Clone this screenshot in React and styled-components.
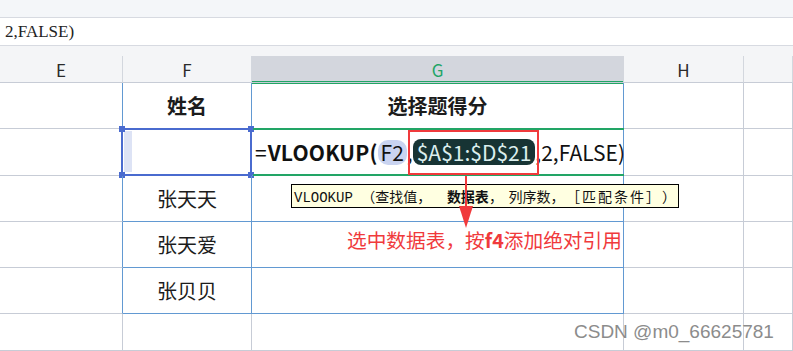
import React from 'react';
import styled, { createGlobalStyle } from 'styled-components';

const GRID = '#c7ccd6';
const BLUE = '#6299d2';
const GREEN = '#22a566';
const SELECT = '#4a6bcf';
const RED = '#f03a3c';

const GlobalStyle = createGlobalStyle`
  html, body { margin: 0; padding: 0; background: #fff; }
  body {
    font-family: "Noto Sans CJK SC", "Liberation Sans", sans-serif;
    color: #1c1c1c;
  }
`;

const Page = styled.div`
  position: relative;
  width: 793px;
  height: 351px;
  overflow: hidden;
  display: flex;
  flex-direction: column;
`;

const TopStrip = styled.div`
  flex: none;
  height: 17px;
  background: #f4f6f9;
  border-bottom: 1px solid #d7dae1;
`;

const FormulaBar = styled.div`
  flex: none;
  height: 27px;
  display: flex;
  align-items: center;
  padding-left: 5px;
  border-bottom: 1px solid #d7dae1;
  font-family: "Liberation Serif", serif;
  font-size: 17px;
  color: #222;
`;

const HeaderGap = styled.div`
  flex: none;
  height: 10px;
  background: #f4f5f7;
`;

const columns = '123px 129px 372px 120px 1fr';

const ColumnHeaders = styled.div`
  flex: none;
  display: grid;
  grid-template-columns: ${columns};
  height: 27px;
  background: #f4f5f7;
`;

const ColHead = styled.div`
  display: flex;
  align-items: center;
  justify-content: center;
  font-size: 17px;
  color: ${(p) => (p.$active ? GREEN : '#2a2a2a')};
  background: ${(p) => (p.$active ? '#d3d6dd' : 'transparent')};
  border-right: 1px solid ${(p) => (p.$active ? '#d3d6dd' : '#d3d7de')};
  border-bottom: 1px solid ${GRID};
  box-shadow: ${(p) => (p.$active ? `inset 0 -1px 0 ${GREEN}, 0 1px 0 ${GREEN}` : 'none')};
  box-sizing: border-box;
`;

const Sheet = styled.div`
  flex: 1;
  display: grid;
  grid-template-columns: ${columns};
  grid-template-rows: 46px 47px 46px 46px 46px 1fr;
`;

const Cell = styled.div`
  position: relative;
  display: flex;
  align-items: center;
  justify-content: center;
  box-sizing: border-box;
  border-right: 1px solid ${(p) => p.$right || GRID};
  border-bottom: 1px solid ${(p) => p.$bottom || GRID};
  font-size: 20px;
  font-weight: ${(p) => (p.$bold ? 700 : 400)};
  white-space: nowrap;
`;

const SelectFrame = styled.div`
  position: absolute;
  left: -2px;
  top: -1px;
  right: -1px;
  bottom: -1px;
  border: 2px solid ${SELECT};
  pointer-events: none;
`;

const Handle = styled.span`
  position: absolute;
  width: 6px;
  height: 6px;
  background: ${SELECT};
  ${(p) => (p.$top ? 'top: -4px;' : 'bottom: -4px;')}
  ${(p) => (p.$left ? 'left: -4px;' : 'right: -4px;')}
`;

const CursorStrip = styled.div`
  position: absolute;
  left: 1px;
  top: 2px;
  bottom: 3px;
  width: 8px;
  background: #dde3f5;
`;

const EditFrame = styled.div`
  position: absolute;
  left: 1px;
  top: -1px;
  right: -1px;
  bottom: -1px;
  border-top: 2px solid ${GREEN};
  border-bottom: 2px solid ${GREEN};
  pointer-events: none;
`;

const Formula = styled.div`
  position: absolute;
  left: 3px;
  top: 0;
  bottom: 0;
  display: flex;
  align-items: center;
  font-size: 21px;
  line-height: 1;
  color: #111;
`;

const Eq = styled.span`
  font-weight: 400;
  margin-right: 1px;
`;

const Fn = styled.span`
  font-weight: 700;
  letter-spacing: 0.2px;
`;

const RefPill = styled.span`
  display: inline-flex;
  align-items: center;
  height: 25px;
  padding: 0 3px;
  border-radius: 10px;
  background: #c9d3f0;
`;

const RangePill = styled.span`
  position: relative;
  display: inline-flex;
  align-items: center;
  height: 26px;
  padding: 0 4px;
  border-radius: 8px;
  background: #173434;
  color: #dcefee;
`;

const RedBox = styled.span`
  position: absolute;
  left: -5px;
  right: -4px;
  top: -9px;
  bottom: -10px;
  border: 2px solid ${RED};
`;

const Tooltip = styled.div`
  position: absolute;
  left: 291px;
  top: 184px;
  width: 388px;
  height: 24px;
  box-sizing: border-box;
  display: flex;
  align-items: center;
  padding-left: 2px;
  border: 1px solid #000;
  background: #ffffe1;
  font-family: "Liberation Mono", "Noto Sans CJK SC", monospace;
  font-size: 14px;
  color: #111;
  white-space: pre;
  text-spacing-trim: space-all;
`;

const Gap = styled.span`
  display: inline-block;
  width: ${(p) => p.$w}px;
`;

const Spread = styled.span`
  letter-spacing: 2px;
`;

const Strong = styled.b`
  font-weight: 700;
`;

const Arrow = styled.svg`
  position: absolute;
  left: 456px;
  top: 176px;
`;

const Note = styled.div`
  position: absolute;
  left: 347px;
  top: 230px;
  font-size: 19.7px;
  line-height: 20px;
  color: ${RED};
  white-space: nowrap;
`;

const Watermark = styled.div`
  position: absolute;
  left: 574px;
  top: 321px;
  font-family: "Liberation Sans", sans-serif;
  font-size: 19px;
  line-height: 22px;
  color: #8c8c8c;
  text-shadow: 0 0 1px #fff;
  white-space: nowrap;
`;

const people = ['张天天', '张天爱', '张贝贝'];

const App = () => {
  const rows = [
    { f: '姓名', g: '选择题得分', bold: true },
    { formula: true },
    ...people.map((name) => ({ f: name })),
    { last: true },
  ];

  return (
    <Page>
      <GlobalStyle />
      <TopStrip />
      <FormulaBar>2,FALSE)</FormulaBar>
      <HeaderGap />
      <ColumnHeaders>
        <ColHead>E</ColHead>
        <ColHead>F</ColHead>
        <ColHead $active>G</ColHead>
        <ColHead>H</ColHead>
        <ColHead />
      </ColumnHeaders>
      <Sheet>
        {rows.map((row, i) => {
          const table = !row.last;
          const edge = table ? BLUE : GRID;
          return (
            <React.Fragment key={i}>
              <Cell $right={edge} />
              <Cell $right={edge} $bottom={edge} $bold={row.bold}>
                {row.formula && (
                  <>
                    <CursorStrip />
                    <SelectFrame>
                      <Handle $top $left />
                      <Handle $top />
                      <Handle $left />
                      <Handle />
                    </SelectFrame>
                  </>
                )}
                {row.f}
              </Cell>
              <Cell $right={edge} $bottom={edge} $bold={row.bold}>
                {row.formula && (
                  <>
                    <EditFrame />
                    <Formula>
                      <Eq>=</Eq>
                      <Fn>VLOOKUP(</Fn>
                      <RefPill>F2</RefPill>
                      <span>,</span>
                      <RangePill>
                        $A$1:$D$21
                        <RedBox />
                      </RangePill>
                      <span>,2,FALSE)</span>
                    </Formula>
                  </>
                )}
                {row.g}
              </Cell>
              <Cell />
              <Cell />
            </React.Fragment>
          );
        })}
      </Sheet>

      <Tooltip>
        VLOOKUP （查找值，<Gap $w={22} /><Strong>数据表</Strong>，<Gap $w={8} />列序数，<Gap $w={2} /><Spread>［匹配条件］）</Spread>
      </Tooltip>

      <Arrow width="20" height="54" viewBox="0 0 20 54">
        <line x1="10" y1="0" x2="10" y2="36" stroke={RED} strokeWidth="2" />
        <polygon points="3,30 17,30 10,52" fill={RED} />
      </Arrow>

      <Note>
        选中数据表，按<Strong>f4</Strong>添加绝对引用
      </Note>

      <Watermark>CSDN @m0_66625781</Watermark>
    </Page>
  );
};

export default App;
